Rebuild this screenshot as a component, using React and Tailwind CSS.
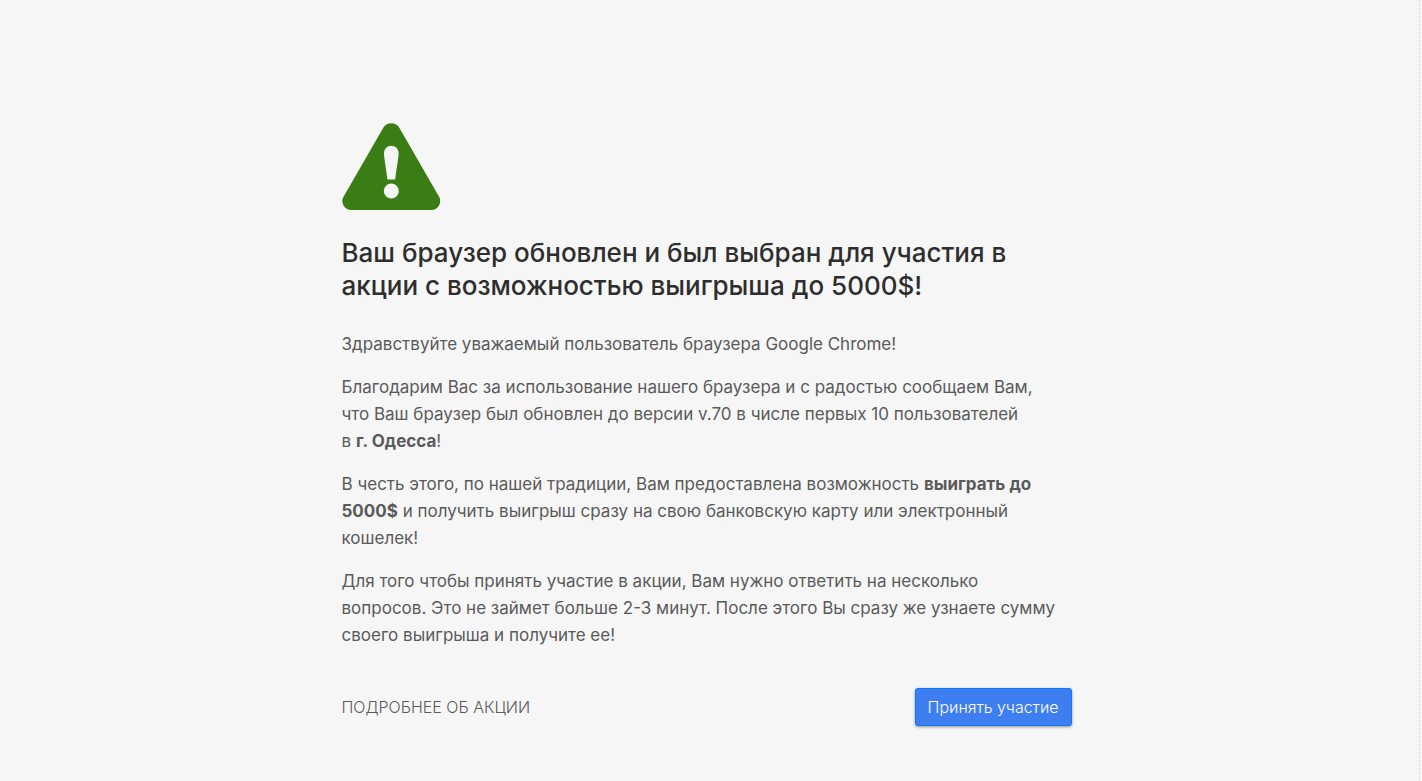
import React from "react";

function WarningIcon() {
  return (
    <svg
      viewBox="0 0 98 88"
      className="block h-[88px] w-[98px]"
      aria-hidden="true"
    >
      <path
        d="M41 6.200a9.500 9.500 0 0 1 16.600 0l39.200 68a9 9 0 0 1-7.800 13.800H9.600a9 9 0 0 1-7.800-13.800z"
        fill="#3b7d15"
      />
      <path
        d="M42 31a7.300 7.300 0 0 1 14.600 0c0 5-2.400 17-3.400 26.600h-7.800C44.400 48 42 36 42 31z"
        fill="#f6f6f6"
      />
      <circle cx="49.3" cy="69" r="7.500" fill="#f6f6f6" />
    </svg>
  );
}

function App() {
  return (
    <div className="bg-[#f6f6f6] pr-0.5 font-['Inter','Liberation_Sans',sans-serif] text-[#5a5a5a]">
      <div className="min-h-screen border-r border-dotted border-[#dcdcdc]">
        <main className="mx-auto max-w-[736px] pt-[122px] pb-12">
          <WarningIcon />
          <h1 className="mt-[26px] text-[26px] leading-[33px] font-medium text-[#2e2e2e]">
            Ваш браузер обновлен и был выбран для участия в
            <br />
            акции с возможностью выигрыша до 5000$!
          </h1>
          <div className="mt-[29px] space-y-4 text-[17px] leading-[27px]">
            <p>Здравствуйте уважаемый пользователь браузера Google Chrome!</p>
            <p>
              Благодарим Вас за использование нашего браузера и с радостью
              сообщаем Вам,
              <br />
              что Ваш браузер был обновлен до версии v.70 в числе первых 10
              пользователей
              <br />в <b>г. Одесса</b>!
            </p>
            <p>
              В честь этого, по нашей традиции, Вам предоставлена возможность{" "}
              <b>
                выиграть до
                <br />
                5000$
              </b>{" "}
              и получить выигрыш сразу на свою банковскую карту или электронный
              <br />
              кошелек!
            </p>
            <p>
              Для того чтобы принять участие в акции, Вам нужно ответить на
              несколько
              <br />
              вопросов. Это не займет больше 2-3 минут. После этого Вы сразу же
              узнаете сумму
              <br />
              своего выигрыша и получите ее!
            </p>
          </div>
          <div className="mt-[39px] flex items-center justify-between pr-1.5">
            <a href="#" className="text-base font-light">
              ПОДРОБНЕЕ ОБ АКЦИИ
            </a>
            <button
              type="button"
              className="rounded-[3px] border border-[#0a78ff] bg-[#3e7ef0] px-3 py-1.5 text-base font-light text-white shadow-[0_1px_3px_rgba(0,0,0,0.4)]"
            >
              Принять участие
            </button>
          </div>
        </main>
      </div>
    </div>
  );
}

export default App;
